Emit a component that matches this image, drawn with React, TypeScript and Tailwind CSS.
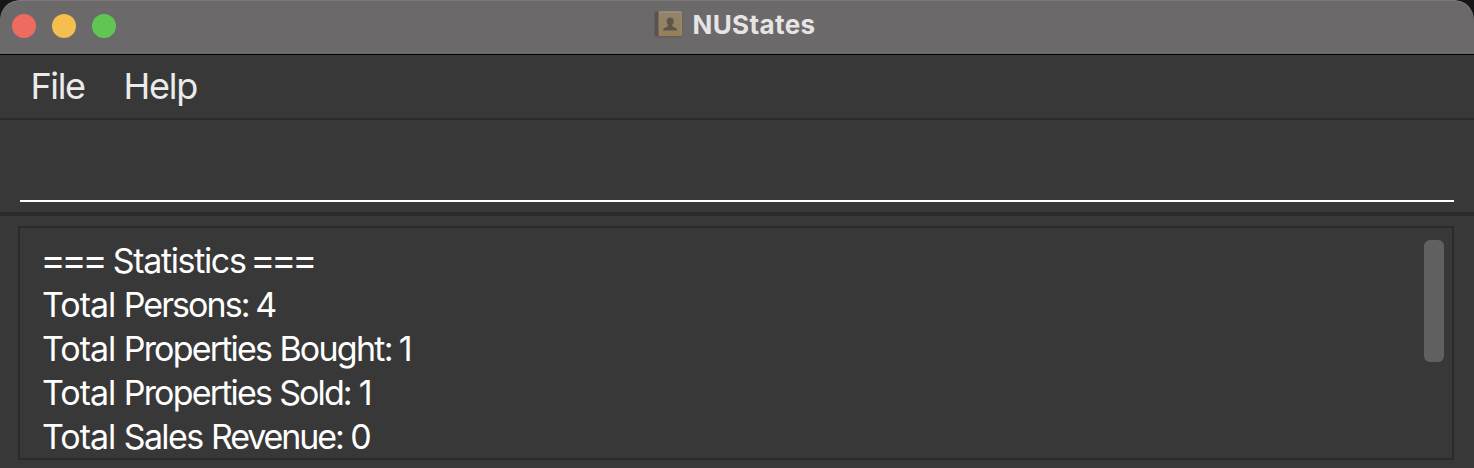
import React from "react";

const lines = [
  [
    { text: "===", style: "text-[38px] leading-none tracking-[-4.2px] -ml-[1.5px]" },
    { text: "Statistics", style: "tracking-[-1.35px] ml-[0.5px]" },
    { text: "===", style: "text-[38px] leading-none tracking-[-4.2px] -ml-[4.2px]" },
  ],
  [
    { text: "Total", style: "tracking-[-1px]" },
    { text: "Persons:", style: "tracking-[-1.95px] -ml-[0.5px]" },
    { text: "4", style: "tracking-[-1.2px] -ml-[2.3px]" },
  ],
  [
    { text: "Total", style: "tracking-[-1px]" },
    { text: "Properties", style: "tracking-[-1.8px] -ml-[0.5px]" },
    { text: "Bought:", style: "tracking-[-1.75px] -ml-[0.8px]" },
    { text: "1", style: "tracking-[-1.2px] -ml-[2px]" },
  ],
  [
    { text: "Total", style: "tracking-[-1px]" },
    { text: "Properties", style: "tracking-[-1.8px] -ml-[0.5px]" },
    { text: "Sold:", style: "tracking-[-1.9px] -ml-[1px]" },
    { text: "1", style: "tracking-[-1.2px] -ml-px" },
  ],
  [
    { text: "Total", style: "tracking-[-1px]" },
    { text: "Sales", style: "tracking-[-1.65px] -ml-[0.5px]" },
    { text: "Revenue:", style: "tracking-[-2.1px] -ml-[0.5px]" },
    { text: "0", style: "tracking-[-1.2px] -ml-[1.5px]" },
  ],
];

function BookIcon() {
  return (
    <svg width="30" height="30" viewBox="0 0 30 30" className="block shrink-0">
      <defs>
        <linearGradient id="cover" x1="0" y1="0" x2="0" y2="1">
          <stop offset="0" stopColor="#91836d" />
          <stop offset="1" stopColor="#988057" />
        </linearGradient>
      </defs>
      <rect x="1" y="3" width="27.5" height="24.5" rx="1.5" fill="#625e5d" />
      <rect x="0.5" y="1.5" width="5" height="24.5" rx="1" fill="#5b5350" />
      <rect x="4.5" y="1.5" width="23.2" height="24.5" rx="1" fill="url(#cover)" />
      <rect x="5" y="1.5" width="22.5" height="1" fill="#a69c88" />
      <rect x="26.7" y="2.5" width="1" height="23" fill="#a28b63" />
      <path
        d="M16.2 7.5c2.2 0 3.5 1.5 3.5 3.8 0 1.7-.7 3-1.5 3.8v1c.5.9 5 1.3 5 4.4H9.2c0-3.1 4.5-3.5 5-4.4v-1c-.8-.8-1.5-2.1-1.5-3.8 0-2.3 1.3-3.8 3.5-3.8z"
        fill="#5d554c"
      />
    </svg>
  );
}

export default function App() {
  return (
    <div className="h-[468px] w-[1474px] overflow-hidden bg-[#15151a] font-['Inter',sans-serif]">
      <div className="flex h-full flex-col overflow-hidden rounded-t-[20px] bg-[#383838]">
        <header className="grid h-[55px] shrink-0 grid-cols-[1fr_auto_1fr] items-start rounded-t-[20px] border-b border-black bg-[#6c696a] shadow-[inset_0_1px_0_#7b797a]">
          <div className="flex gap-4 pt-3.5 pl-3">
            <span className="size-6 rounded-full bg-[#ed6b5f]" />
            <span className="size-6 rounded-full bg-[#f5bf4f]" />
            <span className="size-6 rounded-full bg-[#61c554]" />
          </div>
          <div className="flex items-start gap-[8.5px] pt-2.5 pr-[4.5px]">
            <BookIcon />
            <h1 className="text-[26px] leading-[30px] font-bold tracking-[0.4px] text-[#e6e4e5]">NUStates</h1>
          </div>
        </header>
        <nav className="flex h-[65px] shrink-0 items-start gap-[39px] border-b-2 border-[#2b2b2b] pt-2 pl-[30.5px] text-4xl leading-[46px] text-[#ebebeb]">
          <span className="tracking-[-1.4px]">File</span>
          <span className="tracking-[-1.3px]">Help</span>
        </nav>
        <div className="h-24 shrink-0 border-b-4 border-[#2b2b2b] px-5">
          <input
            aria-label="Command"
            className="block h-[82px] w-full border-b-2 border-white bg-transparent text-[34px] text-white outline-none"
          />
        </div>
        <main className="flex-1 pt-2.5 pr-5 pb-2 pl-[18px]">
          <div className="flex h-[234px] justify-between overflow-hidden border-2 border-[#2b2b2b] pt-[11px] pr-2 pl-[22px]">
            <div className="text-[34px] leading-[44px] tracking-[-0.6px] whitespace-pre text-white">
              {lines.map((words, row) => (
                <p key={row} className="h-11">
                  {words.map((word, i) => (
                    <React.Fragment key={i}>
                      {i > 0 && " "}
                      <span className={word.style}>{word.text}</span>
                    </React.Fragment>
                  ))}
                </p>
              ))}
            </div>
            <div className="mt-px h-[122px] w-5 rounded-md bg-[#606060]" />
          </div>
        </main>
      </div>
    </div>
  );
}
